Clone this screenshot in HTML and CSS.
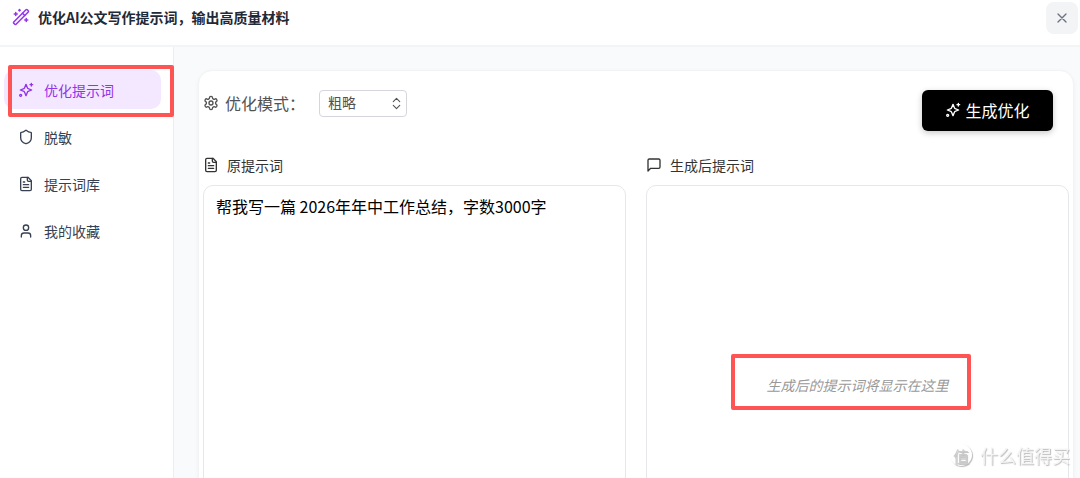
FILE: index.html
```html
<!DOCTYPE html>
<html lang="zh-CN">
<head>
<meta charset="utf-8">
<meta name="viewport" content="width=device-width, initial-scale=1">
<title>优化AI公文写作提示词</title>
<link rel="stylesheet" href="styles.css">
</head>
<body>
<svg class="sprite" aria-hidden="true">
  <symbol id="sparkles" viewBox="0 0 24 24"><path d="M12 3.500 9.900 8.800a2 2 0 0 1-1.100 1.100L3.500 12l5.300 2.100a2 2 0 0 1 1.100 1.100L12 20.500l2.100-5.300a2 2 0 0 1 1.100-1.100L20.500 12l-5.300-2.100a2 2 0 0 1-1.100-1.100Z"/><path d="M20 2v4M22 4h-4"/><circle cx="4" cy="20" r="1.500"/></symbol>
  <symbol id="file" viewBox="0 0 24 24"><path d="M15 2H6a2 2 0 0 0-2 2v16a2 2 0 0 0 2 2h12a2 2 0 0 0 2-2V7Z"/><path d="M14 2v4a2 2 0 0 0 2 2h4M10 9H8M16 13H8M16 17H8"/></symbol>
</svg>
<header class="topbar">
  <svg class="icon icon-wand" viewBox="0 0 24 24"><path d="m21.64 3.64-1.28-1.28a1.21 1.21 0 0 0-1.72 0L2.36 18.64a1.21 1.21 0 0 0 0 1.72l1.28 1.28a1.2 1.2 0 0 0 1.72 0L21.64 5.36a1.2 1.2 0 0 0 0-1.72"/><path d="m14 7 3 3M5 6v4M19 14v4M10 2v2M7 8H3M21 16h-4M11 3H9"/></svg>
  <h1 class="title">优化AI公文写作提示词，输出高质量材料</h1>
  <button class="close" type="button" aria-label="关闭"><svg class="icon" viewBox="0 0 24 24"><path d="M18 6 6 18M6 6l12 12"/></svg></button>
</header>
<div class="layout">
  <nav class="sidebar">
    <a class="nav-item active" href="#optimize"><svg class="icon"><use href="#sparkles"/></svg>优化提示词<span class="mark mark-nav"></span></a>
    <a class="nav-item" href="#mask"><svg class="icon" viewBox="0 0 24 24"><path d="M20 13c0 5-3.5 7.5-7.66 8.95a1 1 0 0 1-.67-.01C7.5 20.5 4 18 4 13V6a1 1 0 0 1 1-1c2 0 4.5-1.2 6.24-2.72a1.17 1.17 0 0 1 1.52 0C14.51 3.81 17 5 19 5a1 1 0 0 1 1 1z"/></svg>脱敏</a>
    <a class="nav-item" href="#library"><svg class="icon"><use href="#file"/></svg>提示词库</a>
    <a class="nav-item" href="#favorites"><svg class="icon" viewBox="0 0 24 24"><path d="M19 21v-2a4 4 0 0 0-4-4H9a4 4 0 0 0-4 4v2"/><circle cx="12" cy="7" r="4"/></svg>我的收藏</a>
  </nav>
  <main class="main">
    <section class="card">
      <div class="toolbar">
        <label class="mode-label" for="mode"><svg class="icon" viewBox="0 0 24 24"><path d="M12.22 2h-.44a2 2 0 0 0-2 2v.18a2 2 0 0 1-1 1.73l-.43.25a2 2 0 0 1-2 0l-.15-.08a2 2 0 0 0-2.73.73l-.22.38a2 2 0 0 0 .73 2.73l.15.1a2 2 0 0 1 1 1.72v.51a2 2 0 0 1-1 1.74l-.15.09a2 2 0 0 0-.73 2.73l.22.38a2 2 0 0 0 2.73.73l.15-.08a2 2 0 0 1 2 0l.43.25a2 2 0 0 1 1 1.73V20a2 2 0 0 0 2 2h.44a2 2 0 0 0 2-2v-.18a2 2 0 0 1 1-1.73l.43-.25a2 2 0 0 1 2 0l.15.08a2 2 0 0 0 2.73-.73l.22-.39a2 2 0 0 0-.73-2.73l-.15-.08a2 2 0 0 1-1-1.74v-.5a2 2 0 0 1 1-1.74l.15-.09a2 2 0 0 0 .73-2.73l-.22-.38a2 2 0 0 0-2.73-.73l-.15.08a2 2 0 0 1-2 0l-.43-.25a2 2 0 0 1-1-1.73V4a2 2 0 0 0-2-2z"/><circle cx="12" cy="12" r="3"/></svg>优化模式：</label>
        <div class="select-wrap">
          <select class="select" id="mode"><option>粗略</option></select>
          <svg class="icon select-arrow" viewBox="0 0 24 24"><path d="m6 15.500 6 6 6-6M6 8.500l6-6 6 6"/></svg>
        </div>
        <button class="generate" type="button"><svg class="icon"><use href="#sparkles"/></svg>生成优化</button>
      </div>
      <div class="columns">
        <div class="column">
          <label class="heading" for="source"><svg class="icon"><use href="#file"/></svg>原提示词</label>
          <textarea class="box source" id="source">帮我写一篇 2026年年中工作总结，字数3000字</textarea>
        </div>
        <div class="column">
          <h2 class="heading"><svg class="icon" viewBox="0 0 24 24"><path d="M21 15a2 2 0 0 1-2 2H7l-4 4V5a2 2 0 0 1 2-2h14a2 2 0 0 1 2 2z"/></svg>生成后提示词</h2>
          <div class="box result"><p class="empty">生成后的提示词将显示在这里<span class="mark mark-result"></span></p></div>
        </div>
      </div>
    </section>
  </main>
</div>
<div class="watermark"><span class="watermark-logo">值</span>什么值得买</div>
</body>
</html>
```
FILE: styles.css
```css
* { box-sizing: border-box; }

body {
  margin: 0;
  height: 100vh;
  overflow: hidden;
  display: flex;
  flex-direction: column;
  background: #fff;
  font-family: "Noto Sans CJK SC", "Noto Sans", sans-serif;
  font-size: 14px;
  line-height: 24px;
  color: #374151;
}

button, select, textarea { font: inherit; }

.sprite { position: absolute; width: 0; height: 0; }

.icon {
  flex: none;
  width: 16px;
  height: 16px;
  fill: none;
  stroke: currentColor;
  stroke-width: 2;
  stroke-linecap: round;
  stroke-linejoin: round;
}

.topbar {
  flex: none;
  display: flex;
  align-items: flex-start;
  gap: 8px;
  padding: 2px 2px 11px 12px;
  border-bottom: 2px solid #f3f4f6;
}

.icon-wand {
  width: 18px;
  height: 18px;
  margin-top: 6px;
  color: #9333ea;
}

.title {
  flex: 1;
  margin: 3px 0 0;
  font-size: 14px;
  font-weight: 700;
  color: #1f2937;
}

.close {
  display: grid;
  place-items: center;
  width: 32px;
  height: 32px;
  padding: 0;
  border: 0;
  border-radius: 8px;
  background: #f3f4f6;
  color: #6b7280;
}

.layout { flex: 1; min-height: 0; display: flex; }

.sidebar {
  flex: none;
  width: 174px;
  display: flex;
  flex-direction: column;
  gap: 8px;
  padding: 23px 12px 0 4px;
  border-right: 1px solid #eceef2;
}

.nav-item {
  position: relative;
  display: flex;
  align-items: center;
  gap: 10px;
  height: 39px;
  padding: 0 14px;
  border-radius: 10px;
  color: #374151;
  text-decoration: none;
}

.active { background: #f3e8ff; color: #9333ea; }

.mark {
  position: absolute;
  border: 4px solid #ff5454;
  border-radius: 2px;
  pointer-events: none;
}

.mark-nav { inset: -5px -13px -8px 4px; }

.mark-result { inset: -23px -22px -17px -36px; }

.main {
  flex: 1;
  min-width: 0;
  min-height: 0;
  overflow: hidden;
  padding: 23px 6px 0 24px;
  background: #f8fafc;
}

.card {
  padding: 19px 4px 20px;
  border: 1px solid #f1f3f6;
  border-radius: 14px;
  background: #fff;
  box-shadow: 0 1px 4px #0000000a;
}

.toolbar { display: flex; align-items: flex-start; margin-bottom: 22px; }

.mode-label {
  display: flex;
  align-items: center;
  gap: 6px;
  height: 26px;
  margin-right: 14px;
  font-size: 16px;
  color: #525252;
}

.select-wrap { position: relative; width: 88px; }

.select {
  display: block;
  width: 100%;
  height: 27px;
  padding: 0 24px 4px 8px;
  appearance: none;
  border: 1px solid #d4d6dc;
  border-radius: 4px;
  background: #fff;
  line-height: 22px;
  color: #525252;
}

.select-arrow {
  position: absolute;
  top: 7px;
  right: 4px;
  width: 13px;
  height: 13px;
  color: #525252;
  pointer-events: none;
}

.generate {
  display: flex;
  align-items: center;
  justify-content: center;
  gap: 4px;
  width: 131px;
  height: 41px;
  margin: 0 16px 0 auto;
  padding: 0 0 2px;
  border: 0;
  border-radius: 6px;
  background: #000;
  box-shadow: 0 2px 6px #00000038;
  font-size: 16px;
  color: #fff;
}

.columns { display: grid; grid-template-columns: 1fr 1fr; gap: 20px; }

.column { min-width: 0; }

.heading {
  display: flex;
  align-items: center;
  gap: 8px;
  margin: 0 0 8px;
  font-size: 14px;
  font-weight: 400;
  color: #333;
}

.box {
  display: block;
  width: 100%;
  height: 400px;
  border: 1px solid #e5e7eb;
  border-radius: 10px;
  background: #fff;
}

.source {
  padding: 8px 12px;
  font-size: 16px;
  color: #000;
  resize: none;
  outline: 0;
}

.result { display: grid; place-items: center; }

.empty {
  position: relative;
  margin: 0;
  line-height: 16px;
  font-style: italic;
  color: #999;
}

.watermark {
  position: fixed;
  right: 10px;
  bottom: 11px;
  display: flex;
  align-items: center;
  gap: 8px;
  font-size: 18px;
  color: #f4f4f4;
  text-shadow: 1px 1px 1px #bbb;
}

.watermark-logo {
  display: grid;
  place-items: center;
  width: 22px;
  height: 22px;
  border-radius: 50%;
  box-shadow: 1px 1px 1px #bbb;
  font-size: 16px;
  color: #ccc;
}
```
